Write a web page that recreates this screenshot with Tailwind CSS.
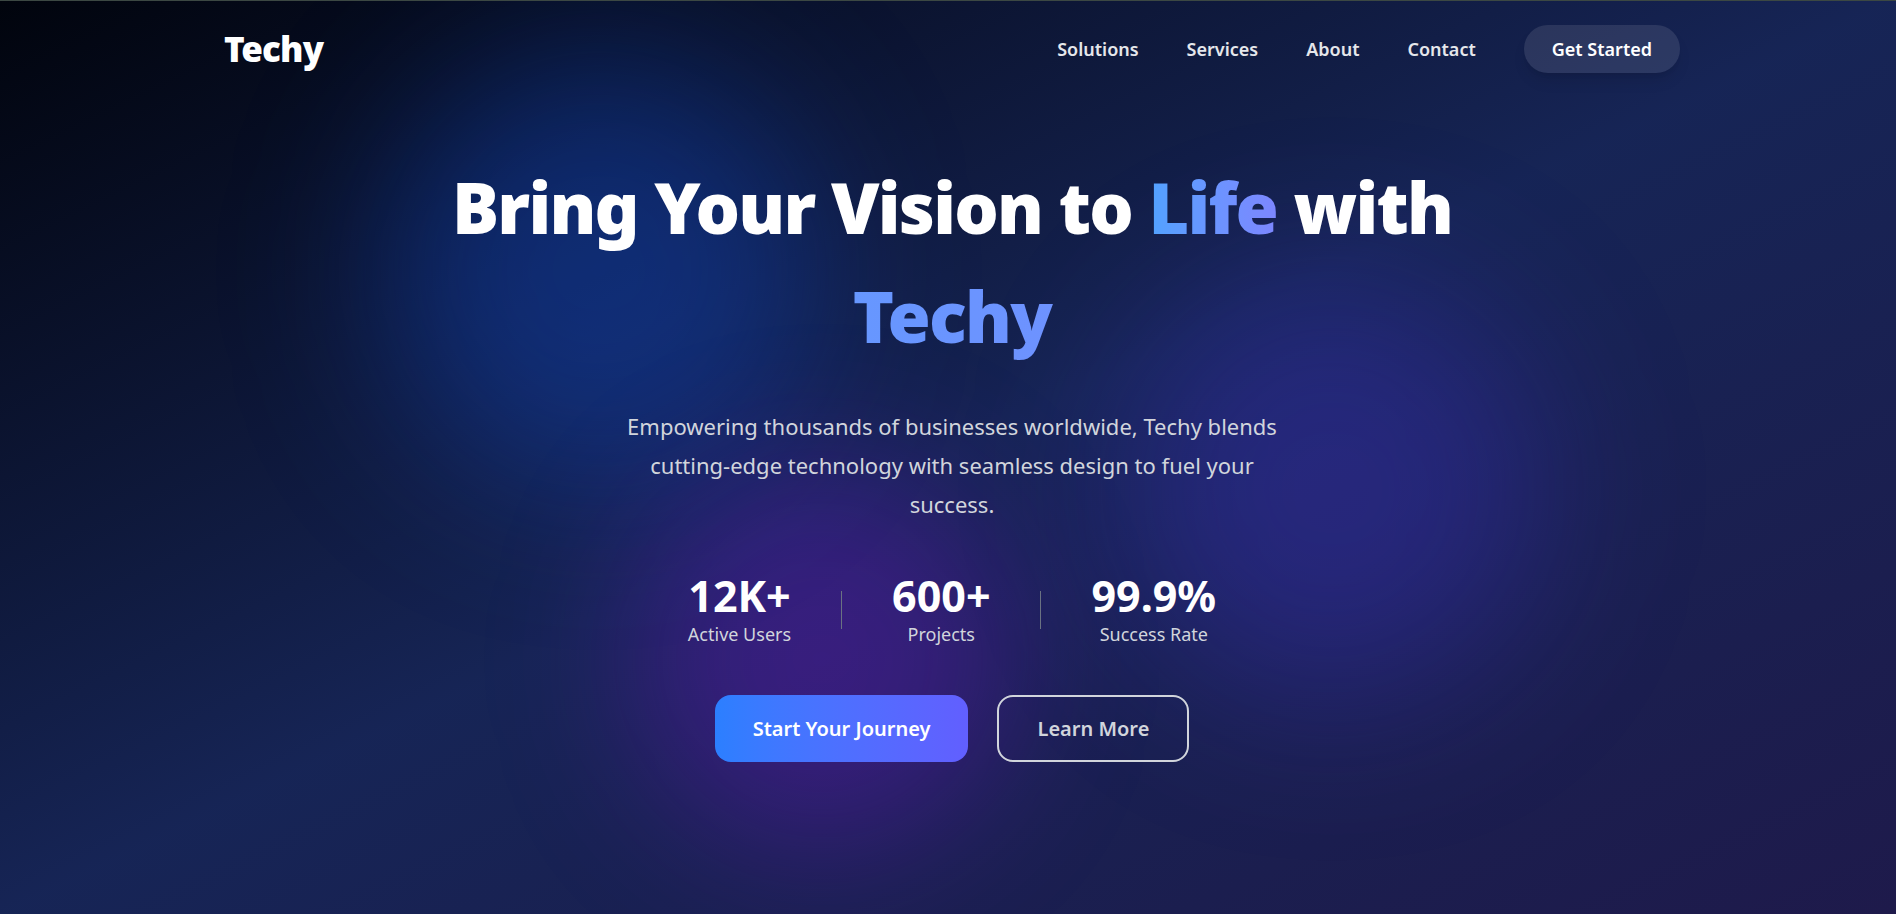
<!DOCTYPE html>
<html lang="en">
<head>
<meta charset="utf-8">
<title>Techy</title>
<script src="https://cdn.jsdelivr.net/npm/@tailwindcss/browser@4"></script>
</head>
<body class="font-['Segoe_UI','Noto_Sans','Open_Sans',sans-serif] text-white">
<div class="relative isolate flex min-h-screen flex-col overflow-hidden border-t border-[#3c4843] bg-linear-to-br/srgb from-[#01040d] via-blue-950 to-[#1e1a4b] pl-2">
  <div class="absolute -z-10 left-[384px] top-[54px] size-[430px] rounded-full bg-blue-600/30 blur-[80px]"></div>
  <div class="absolute -z-10 left-[1122px] top-[278px] size-[420px] rounded-full bg-indigo-600/25 blur-[80px]"></div>
  <div class="absolute -z-10 left-[632px] top-[468px] size-[380px] rounded-full bg-purple-600/25 blur-[72px]"></div>

  <header class="mx-auto flex w-full max-w-[1536px] items-center justify-between px-10 py-6">
    <a href="#" class="text-[35px] leading-12 font-black tracking-tight">Techy</a>
    <nav class="flex items-center gap-12 text-lg font-semibold text-gray-200">
      <a href="#">Solutions</a>
      <a href="#">Services</a>
      <a href="#">About</a>
      <a href="#">Contact</a>
      <button class="h-12 rounded-full bg-white/10 px-7 text-white shadow-lg">Get Started</button>
    </nav>
  </header>

  <main class="mx-auto flex w-full max-w-6xl flex-col items-center pt-14 text-center">
    <h1 class="w-full text-[70px] leading-[109px] font-black tracking-tight">Bring Your Vision to <span class="bg-linear-to-r from-blue-400 to-indigo-400 bg-clip-text text-transparent">Life</span> with <span class="block bg-linear-to-r from-blue-400 to-indigo-400 bg-clip-text text-transparent">Techy</span></h1>
    <p class="mt-9 max-w-2xl text-[22px] leading-[39px] text-gray-300">Empowering thousands of businesses worldwide, Techy blends cutting-edge technology with seamless design to fuel your success.</p>
    <div class="mt-12 flex items-center gap-[50px]">
      <div><div class="text-[43px] leading-[48px] font-bold">12K+</div><div class="text-lg text-gray-300">Active Users</div></div>
      <div class="h-[38px] w-px bg-gray-500"></div>
      <div><div class="text-[43px] leading-[48px] font-bold">600+</div><div class="text-lg text-gray-300">Projects</div></div>
      <div class="h-[38px] w-px bg-gray-500"></div>
      <div><div class="text-[43px] leading-[48px] font-bold">99.9%</div><div class="text-lg text-gray-300">Success Rate</div></div>
    </div>
    <div class="mt-[47px] flex gap-[29px] text-xl font-semibold">
      <button class="h-[67px] rounded-2xl bg-linear-to-r from-blue-500 to-indigo-500 px-[38px]">Start Your Journey</button>
      <button class="h-[67px] rounded-2xl border-2 border-gray-300 px-[38px] text-gray-300">Learn More</button>
    </div>
  </main>
</div>
</body>
</html>
